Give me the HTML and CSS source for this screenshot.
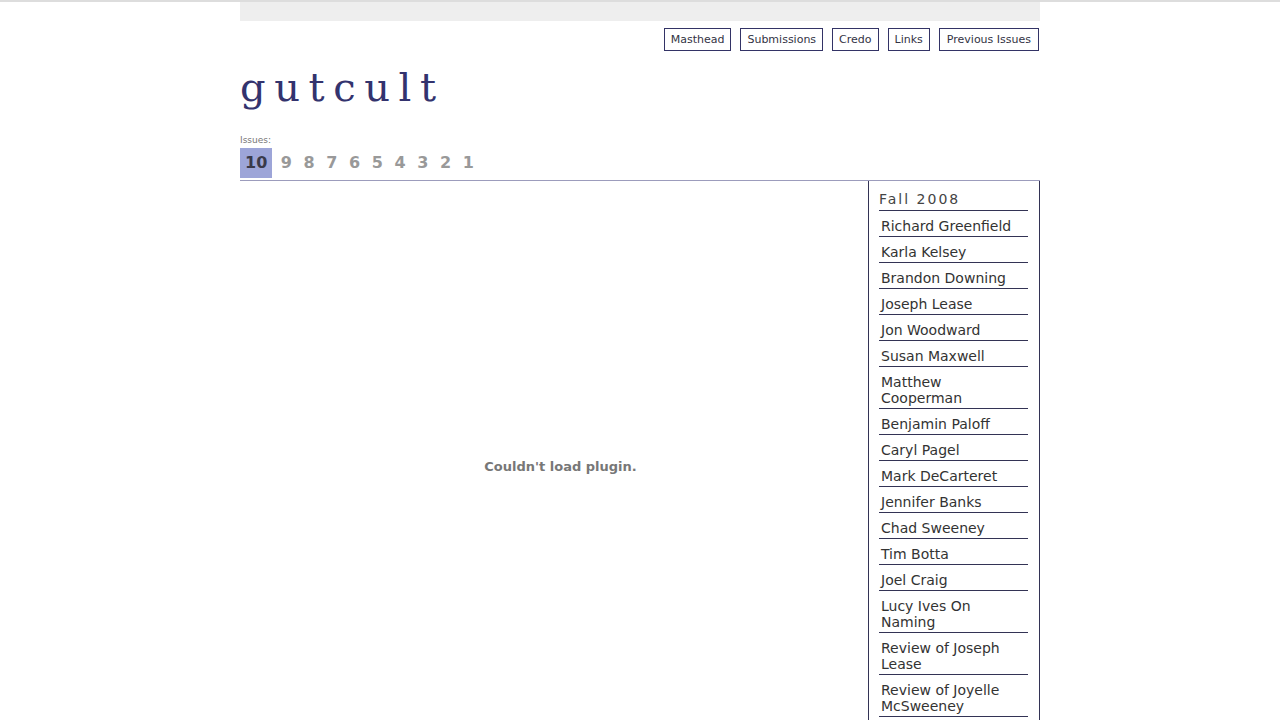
FILE: index.html
```html
<!DOCTYPE html>
<html lang="en">
<head>
<meta charset="utf-8">
<title>gutcult</title>
<link rel="stylesheet" href="styles.css">
</head>
<body>
<div class="page">
  <div class="topbar"></div>
  <nav class="nav">
    <a class="nav-btn" href="#">Masthead</a>
    <a class="nav-btn" href="#">Submissions</a>
    <a class="nav-btn" href="#">Credo</a>
    <a class="nav-btn" href="#">Links</a>
    <a class="nav-btn" href="#">Previous Issues</a>
  </nav>
  <h1 class="logo">gutcult</h1>
  <div class="issues-label">Issues:</div>
  <div class="issues">
    <a class="issue current" href="#">10</a>
    <a class="issue" href="#">9</a>
    <a class="issue" href="#">8</a>
    <a class="issue" href="#">7</a>
    <a class="issue" href="#">6</a>
    <a class="issue" href="#">5</a>
    <a class="issue" href="#">4</a>
    <a class="issue" href="#">3</a>
    <a class="issue" href="#">2</a>
    <a class="issue" href="#">1</a>
  </div>
  <div class="content">
    <main class="main">
      <div class="plugin">Couldn't load plugin.</div>
    </main>
    <aside class="sidebar">
      <div class="season">Fall 2008</div>
      <ul class="toc">
        <li><a href="#">Richard Greenfield</a></li>
        <li><a href="#">Karla Kelsey</a></li>
        <li><a href="#">Brandon Downing</a></li>
        <li><a href="#">Joseph Lease</a></li>
        <li><a href="#">Jon Woodward</a></li>
        <li><a href="#">Susan Maxwell</a></li>
        <li><a href="#">Matthew Cooperman</a></li>
        <li><a href="#">Benjamin Paloff</a></li>
        <li><a href="#">Caryl Pagel</a></li>
        <li><a href="#">Mark DeCarteret</a></li>
        <li><a href="#">Jennifer Banks</a></li>
        <li><a href="#">Chad Sweeney</a></li>
        <li><a href="#">Tim Botta</a></li>
        <li><a href="#">Joel Craig</a></li>
        <li><a href="#">Lucy Ives On Naming</a></li>
        <li><a href="#">Review of Joseph Lease</a></li>
        <li><a href="#">Review of Joyelle McSweeney</a></li>
      </ul>
    </aside>
  </div>
</div>
</body>
</html>
```
FILE: styles.css
```css
html, body {
  margin: 0;
  padding: 0;
  background: #ffffff;
}
body {
  border-top: 2px solid #dddddd;
  font-family: "DejaVu Sans", Verdana, sans-serif;
  color: #333333;
}
a {
  text-decoration: none;
  color: inherit;
}
.page {
  width: 800px;
  margin: 0 auto;
}
.topbar {
  height: 19px;
  background: #eeeeee;
}
.nav {
  display: flex;
  justify-content: flex-end;
  gap: 9px;
  margin-top: 7px;
  padding-right: 1px;
}
.nav-btn {
  display: block;
  font-size: 11px;
  line-height: 13px;
  padding: 4px 6px;
  border: 1px solid #333366;
  background: #ffffff;
  color: #333344;
}
.nav-btn:last-child {
  padding: 4px 7px;
}
.logo {
  margin: 13px 0 0 0;
  font-family: "DejaVu Serif", "Liberation Serif", serif;
  font-weight: normal;
  font-size: 40px;
  line-height: normal;
  letter-spacing: 8.6px;
  color: #33336e;
}
.issues-label {
  margin-top: 25px;
  font-size: 9px;
  line-height: 11px;
  color: #777777;
}
.issues {
  display: flex;
  gap: 5.6px;
  margin-top: 2px;
}
.issue {
  display: block;
  padding: 6px 3px;
  font-size: 16px;
  line-height: 18px;
  font-weight: bold;
  color: #999999;
}
.issue.current {
  padding: 6px 5px;
  background: #9da5d8;
  color: #3a3a4a;
}
.content {
  display: flex;
  margin-top: 2px;
  border-top: 1px solid #9c9cbc;
}
.main {
  flex: 1;
  padding-left: 13px;
}
.plugin {
  height: 570px;
  display: flex;
  align-items: center;
  justify-content: center;
  font-size: 13px;
  font-weight: bold;
  color: #777777;
}
.sidebar {
  width: 149px;
  padding: 0 11px 0 10px;
  border-left: 1px solid #333355;
  border-right: 1px solid #333355;
}
.season {
  padding: 10px 0 3px 0;
  font-size: 14px;
  line-height: 16px;
  letter-spacing: 2px;
  color: #444444;
  border-bottom: 1px solid #333355;
}
.toc {
  list-style: none;
  margin: 0;
  padding: 0;
}
.toc li {
  border-bottom: 1px solid #333355;
  padding: 7px 4px 2px 2px;
  font-size: 14px;
  line-height: 16px;
}
.toc a {
  color: #333333;
}
```
